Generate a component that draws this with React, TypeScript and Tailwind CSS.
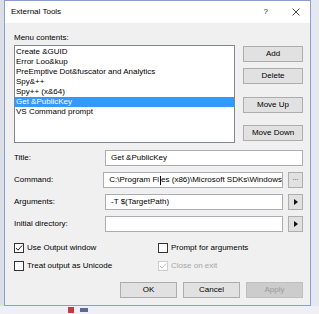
import React from "react";

const font = { fontFamily: '"Segoe UI", "Liberation Sans", Arial, sans-serif' };

const items = [
  "Create &GUID",
  "Error Loo&kup",
  "PreEmptive Dot&fuscator and Analytics",
  "Spy&++",
  "Spy++ (x&64)",
  "Get &PublicKey",
  "VS Command prompt",
];

function Btn({ label, className = "" }: { label: string; className?: string }) {
  return (
    <div
      className={`flex h-[16px] items-center justify-center border border-[#adadad] bg-[#e1e1e1] text-[8px] text-black ${className}`}
    >
      {label}
    </div>
  );
}

function Arrow() {
  return (
    <div className="flex h-[16px] w-[15px] items-center justify-center border border-[#adadad] bg-[#e1e1e1]">
      <svg width="4" height="6" viewBox="0 0 4 6">
        <path d="M0 0L4 3L0 6Z" fill="#111" />
      </svg>
    </div>
  );
}

function Check({ checked, disabled, label }: { checked?: boolean; disabled?: boolean; label: string }) {
  return (
    <div className="flex h-[12px] items-center gap-[3px]">
      <div
        className={`flex h-[10px] w-[10px] items-center justify-center border bg-white ${
          disabled ? "border-[#cccccc]" : "border-[#333]"
        }`}
      >
        {checked && (
          <svg width="8" height="8" viewBox="0 0 8 8">
            <path
              d="M1 4L3 6.2L7 1.5"
              fill="none"
              stroke={disabled ? "#c0c0c0" : "#222"}
              strokeWidth="1"
            />
          </svg>
        )}
      </div>
      <span className={`text-[8px] ${disabled ? "text-[#a6a6a6]" : "text-black"}`}>{label}</span>
    </div>
  );
}

function Row({ label, children }: { label: string; children: React.ReactNode }) {
  return (
    <div className="flex h-[16px] items-center">
      <span className="w-[91px] text-[8px] text-black">{label}</span>
      <div className="flex flex-1 items-center gap-[5px]">{children}</div>
    </div>
  );
}

export default function App() {
  return (
    <div style={font} className="flex h-[314px] w-[319px] flex-col overflow-hidden bg-[#e9ecf3]">
      <div className="flex h-[306px]">
        <div className="w-[4px] bg-[#dcdfe8]" />
        <div className="flex h-[306px] w-[307px] flex-col border border-[#8c9dd4] bg-[#f0f0f0]">
          {/* Title bar */}
          <div className="flex h-[22px] items-center bg-white pl-[6px] pr-[10px]">
            <span className="flex-1 text-[8px] text-black">External Tools</span>
            <span className="mr-[24px] text-[8px] text-[#222]">?</span>
            <svg width="8" height="8" viewBox="0 0 8 8">
              <path d="M0.5 0.5L7.5 7.5M7.5 0.5L0.5 7.5" stroke="#333" strokeWidth="0.9" />
            </svg>
          </div>

          <div className="flex flex-col pl-[9px] pr-[7px]">
            <div className="mt-[9px] h-[13px] text-[8px] text-black">Menu contents:</div>

            <div className="flex gap-[8px]">
              <div className="flex h-[98px] w-[221px] flex-col border border-[#828790] bg-white pt-[1px]">
                {items.map((it, i) => (
                  <div
                    key={it}
                    className={`flex h-[10px] items-center pl-[1px] text-[8px] ${
                      i === 5 ? "bg-[#3399ff] text-white" : "text-black"
                    }`}
                  >
                    {it}
                  </div>
                ))}
              </div>
              <div className="flex w-[60px] flex-col pt-[1px]">
                <Btn label="Add" />
                <Btn label="Delete" className="mt-[6px]" />
                <Btn label="Move Up" className="mt-[13px]" />
                <Btn label="Move Down" className="mt-[12px]" />
              </div>
            </div>

            <div className="mt-[7px] flex flex-col gap-[6px]">
              <Row label="Title:">
                <div className="flex h-[16px] flex-1 items-center border border-[#abadb3] bg-white pl-[5px] text-[8px] text-black">
                  Get &amp;PublicKey
                </div>
              </Row>
              <Row label="Command:">
                <div className="flex h-[16px] flex-1 items-center overflow-hidden whitespace-nowrap border border-[#abadb3] bg-white pl-[5px] text-[8px] text-black">
                  C:\Program Fi
                  <span className="mx-[0.5px] inline-block h-[9px] w-[1px] bg-black" />
                  es (x86)\Microsoft SDKs\Windows
                </div>
                <div className="flex h-[16px] w-[15px] items-center justify-center border border-[#adadad] bg-[#e1e1e1] pb-[3px] text-[7px] text-[#333]">
                  ...
                </div>
              </Row>
              <Row label="Arguments:">
                <div className="flex h-[16px] flex-1 items-center border border-[#abadb3] bg-white pl-[5px] text-[8px] text-black">
                  -T $(TargetPath)
                </div>
                <Arrow />
              </Row>
              <Row label="Initial directory:">
                <div className="h-[16px] flex-1 border border-[#abadb3] bg-white" />
                <Arrow />
              </Row>
            </div>

            <div className="mt-[10px] grid grid-cols-[144px_1fr] gap-y-[6px]">
              <Check checked label="Use Output window" />
              <Check label="Prompt for arguments" />
              <Check label="Treat output as Unicode" />
              <Check checked disabled label="Close on exit" />
            </div>

            <div className="mt-[10px] flex justify-end gap-[6px]">
              <Btn label="OK" className="w-[57px] border-[#0078d7]" />
              <Btn label="Cancel" className="w-[57px]" />
              <div className="flex h-[16px] w-[57px] items-center justify-center border border-[#bfbfbf] bg-[#cccccc] text-[8px] text-[#9a9a9a]">
                Apply
              </div>
            </div>
          </div>
        </div>
        <div className="flex-1 bg-[#e4e8f1]" />
      </div>
      <div className="flex h-[8px] items-center gap-[6px] bg-[#eef0f5] pl-[68px]">
        <div className="h-[6px] w-[6px] bg-[#c83a3a]" />
        <div className="h-[4px] w-[8px] bg-[#5a6b8c]" />
      </div>
    </div>
  );
}
